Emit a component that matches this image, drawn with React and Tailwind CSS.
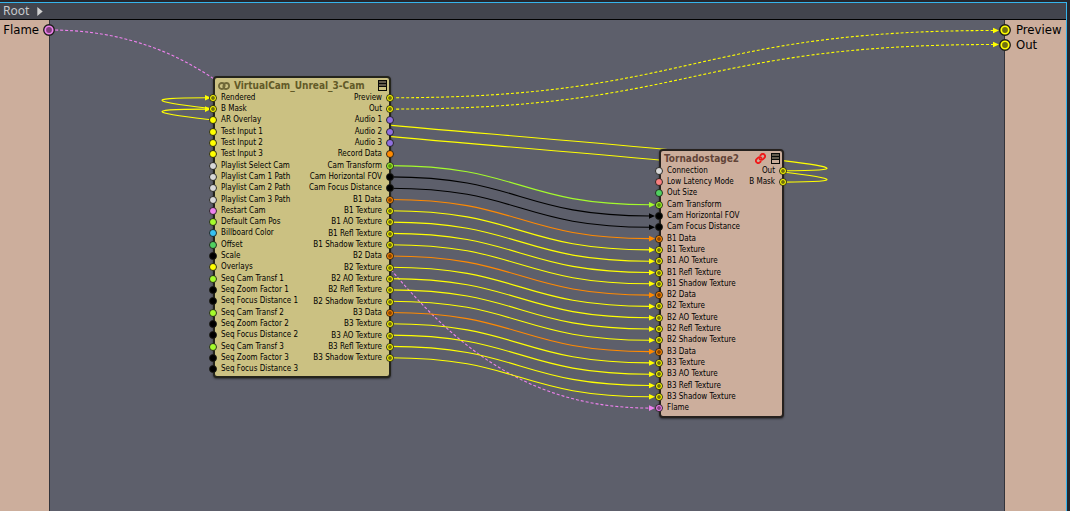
import { useLayoutEffect, useRef, useState } from "react";

const COLORS = {
  yellow: "#ffff00",
  orange: "#ff8a00",
  black: "#000000",
  green: "#a4fb2c",
  emerald: "#50d060",
  violet: "#9070e0",
  white: "#d8d8d8",
  pink: "#ee82ee",
  blue: "#38c0f0",
  red: "#f88080",
};

const CENTERS = {
  yellow: "#6e6e10",
  orange: "#8a4400",
  black: "#000000",
  green: "#5c9010",
  pink: "#80407c",
};

// [label, colour, connected]
const CAM_INPUTS = [
  ["Rendered", "yellow", true],
  ["B Mask", "yellow", true],
  ["AR Overlay", "yellow"],
  ["Test Input 1", "yellow"],
  ["Test Input 2", "yellow"],
  ["Test Input 3", "yellow"],
  ["Playlist Select Cam", "white"],
  ["Playlist Cam 1 Path", "white"],
  ["Playlist Cam 2 Path", "white"],
  ["Playlist Cam 3 Path", "white"],
  ["Restart Cam", "pink"],
  ["Default Cam Pos", "green"],
  ["Billboard Color", "blue"],
  ["Offset", "emerald"],
  ["Scale", "black"],
  ["Overlays", "yellow"],
  ["Seq Cam Transf 1", "green"],
  ["Seq Zoom Factor 1", "black"],
  ["Seq Focus Distance 1", "black"],
  ["Seq Cam Transf 2", "green"],
  ["Seq Zoom Factor 2", "black"],
  ["Seq Focus Distance 2", "black"],
  ["Seq Cam Transf 3", "green"],
  ["Seq Zoom Factor 3", "black"],
  ["Seq Focus Distance 3", "black"],
];

const SHARED = [
  ["Cam Transform", "green", true],
  ["Cam Horizontal FOV", "black", true],
  ["Cam Focus Distance", "black", true],
  ...[1, 2, 3].flatMap((n) => [
    [`B${n} Data`, "orange", true],
    [`B${n} Texture`, "yellow", true],
    [`B${n} AO Texture`, "yellow", true],
    [`B${n} Refl Texture`, "yellow", true],
    [`B${n} Shadow Texture`, "yellow", true],
  ]),
];

const CAM_OUTPUTS = [
  ["Preview", "yellow", true],
  ["Out", "yellow", true],
  ["Audio 1", "violet"],
  ["Audio 2", "violet"],
  ["Audio 3", "violet"],
  ["Record Data", "orange"],
  ...SHARED,
];

const STAGE_INPUTS = [
  ["Connection", "white"],
  ["Low Latency Mode", "red"],
  ["Out Size", "emerald"],
  ...SHARED,
  ["Flame", "pink", true],
];

const STAGE_OUTPUTS = [
  ["Out", "yellow", true],
  ["B Mask", "yellow", true],
];

function Port({ color, connected, big }) {
  return (
    <svg viewBox="0 0 10 10" className={big ? "block size-3 shrink-0" : "block size-2 shrink-0"} aria-hidden="true">
      <circle cx="5" cy="5" r="4.4" fill={COLORS[color]} stroke="#1c1c18" strokeWidth="1.1" />
      {connected && <circle cx="5" cy="5" r="2.4" fill={CENTERS[color]} />}
    </svg>
  );
}

function PortList({ ports, side, rows }) {
  const left = side === "left";
  return (
    <ul className={`grid ${rows} ${left ? "-ml-[6px]" : "-mr-[5px] justify-items-end"}`}>
      {ports.map(([label, color, connected]) => (
        <li key={label} className={`flex min-h-0 items-center gap-1 ${left ? "" : "flex-row-reverse"}`}>
          <Port color={color} connected={connected} />
          <span className="text-[8px] leading-[10px] whitespace-nowrap text-black">{label}</span>
        </li>
      ))}
    </ul>
  );
}

function MenuButton({ fill }) {
  return (
    <button type="button" aria-label="Node menu" className="block shrink-0">
      <svg viewBox="0 0 9 11" className="block h-[11px] w-[9px]" aria-hidden="true">
        <rect width="9" height="11" fill="#0a0a08" />
        <path d="M1 2h7M1 5h7" stroke="#625a4c" strokeWidth="2" />
        <rect x="1" y="7" width="7" height="3" fill={fill} />
      </svg>
    </button>
  );
}

function Wire({ from, to, color, dashed, loop }) {
  const [x1, y1] = from;
  const [x2, y2] = to;
  const end = x2 - 9;
  const d = loop ? Math.abs(end - x1) * 0.48 : Math.abs(end - x1) / 2;
  return (
    <g>
      <path
        d={`M${x1} ${y1}C${x1 + d} ${y1} ${end - d} ${y2} ${end} ${y2}`}
        fill="none"
        stroke={COLORS[color]}
        strokeWidth="1.1"
        strokeDasharray={dashed ? "3 2" : undefined}
      />
      <path d={`M${end - 1} ${y2 - 2.8}L${end + 5} ${y2}L${end - 1} ${y2 + 2.8}Z`} fill={COLORS[color]} />
    </g>
  );
}

const camY = (i) => 77.8 + i * 11.3;
const stageY = (i) => 150.8 + i * 11.3;

function Wires({ width }) {
  return (
    <svg className="absolute inset-0 size-full overflow-visible" aria-hidden="true">
      <Wire from={[0, 10]} to={[609, stageY(21)]} color="pink" dashed />
      <Wire from={[341, camY(0)]} to={[width - 1, 10.5]} color="yellow" dashed />
      <Wire from={[341, camY(1)]} to={[width - 1, 24.5]} color="yellow" dashed />
      <Wire from={[733, stageY(0)]} to={[165, camY(0)]} color="yellow" loop />
      <Wire from={[733, stageY(1)]} to={[165, camY(1)]} color="yellow" loop />
      {SHARED.map(([label, color], i) => (
        <Wire key={label} from={[340, camY(i + 6)]} to={[609, stageY(i + 3)]} color={color} />
      ))}
    </svg>
  );
}

export default function App() {
  const canvas = useRef(null);
  const [width, setWidth] = useState(954);

  useLayoutEffect(() => {
    const measure = () => setWidth(canvas.current.clientWidth);
    measure();
    window.addEventListener("resize", measure);
    return () => window.removeEventListener("resize", measure);
  }, []);

  return (
    <div className="flex h-screen flex-col overflow-hidden bg-[#25262c] pt-[2px] pr-[3px] font-['DejaVu_Sans_Condensed','DejaVu_Sans',sans-serif]">
      <div className="flex min-h-0 flex-1 flex-col border-t border-r border-[#35b4ec]">
        <header className="flex h-[17px] shrink-0 items-center border-b border-black bg-[#42444d] pl-[3px]">
          <button type="button" className="flex items-center gap-2 font-['Noto_Sans',sans-serif] text-[12px] leading-4 text-[#c8c9cc]">
            Root
            <svg viewBox="0 0 6 10" className="block h-[9px] w-[6px]" aria-hidden="true">
              <path d="M0 0L6 5L0 10Z" fill="#d0d0d0" />
            </svg>
          </button>
        </header>

        <div className="flex min-h-0 flex-1">
          <aside className="w-[50px] shrink-0 border-r border-[#33343b] bg-[#ccae9c]">
            <div className="-mr-[6px] flex h-5 items-center justify-end gap-1 text-[13px] leading-4 text-black">
              Flame
              <span className="relative z-10"><Port color="pink" connected big /></span>
            </div>
          </aside>

          <main ref={canvas} className="relative min-w-0 flex-1 bg-[#5d5f6b]">
            <Wires width={width} />

            <section className="absolute top-[56px] left-[163px] w-[178px] rounded-[4px] border-2 border-[#24241c] bg-[#cbc182] pb-px shadow-[0_1px_2px_rgba(0,0,0,0.5)]">
              <div className="flex h-[14px] items-center gap-[4px] pt-px pr-[2px] pl-[3px]">
                <svg viewBox="0 0 12 8" className="block h-2 w-3 shrink-0" fill="none" stroke="#6f6838" strokeWidth="1.8" strokeLinecap="round" aria-hidden="true">
                  <path d="M6.2 5.6C5.700 6.500 4.900 7 3.800 7A2.900 3 0 0 1 3.800 1C5.900 1 6.900 2.400 6.700 4.200" />
                  <path d="M5.800 2.400C6.300 1.500 7.100 1 8.200 1A2.900 3 0 0 1 8.200 7C6.100 7 5.100 5.600 5.300 3.800" />
                </svg>
                <h2 className="min-w-0 flex-1 text-[10px] leading-[14px] font-bold whitespace-nowrap text-[#625a28]">VirtualCam_Unreal_3-Cam</h2>
                <MenuButton fill="#cbc182" />
              </div>
              <div className="flex h-[283px] items-start justify-between">
                <PortList side="left" ports={CAM_INPUTS} rows="h-full auto-rows-fr" />
                <PortList side="right" ports={CAM_OUTPUTS} rows="h-[272px] auto-rows-fr" />
              </div>
            </section>

            <section className="absolute top-[129px] left-[609px] w-[125px] rounded-[4px] border-2 border-[#26211e] bg-[#ccae9c] pb-[2px] shadow-[0_1px_2px_rgba(0,0,0,0.5)]">
              <div className="flex h-[14px] items-center gap-[5px] pt-px pr-[2px] pl-[3px]">
                <h2 className="min-w-0 flex-1 text-[10px] leading-[14px] font-bold whitespace-nowrap text-[#624438]">Tornadostage2</h2>
                <svg viewBox="0 0 24 24" className="block size-[11px] shrink-0" fill="none" stroke="#f01818" strokeWidth="4" strokeLinecap="round" strokeLinejoin="round" aria-hidden="true">
                  <path d="M10 13a5 5 0 0 0 7.540.540l3-3a5 5 0 0 0-7.070-7.070l-1.720 1.710" />
                  <path d="M14 11a5 5 0 0 0-7.540-.540l-3 3a5 5 0 0 0 7.070 7.070l1.710-1.710" />
                </svg>
                <MenuButton fill="#ccae9c" />
              </div>
              <div className="flex h-[249px] items-start justify-between">
                <PortList side="left" ports={STAGE_INPUTS} rows="h-full auto-rows-fr" />
                <PortList side="right" ports={STAGE_OUTPUTS} rows="h-[23px] auto-rows-fr" />
              </div>
            </section>
          </main>

          <aside className="w-[62px] shrink-0 border-l border-[#33343b] bg-[#ccae9c] pt-[2px]">
            {["Preview", "Out"].map((label) => (
              <div key={label} className="-ml-[6px] flex h-[15px] items-center gap-[5px] text-[13px] leading-[15px] text-black">
                <span className="relative z-10"><Port color="yellow" connected big /></span>
                {label}
              </div>
            ))}
          </aside>
        </div>
      </div>
    </div>
  );
}
